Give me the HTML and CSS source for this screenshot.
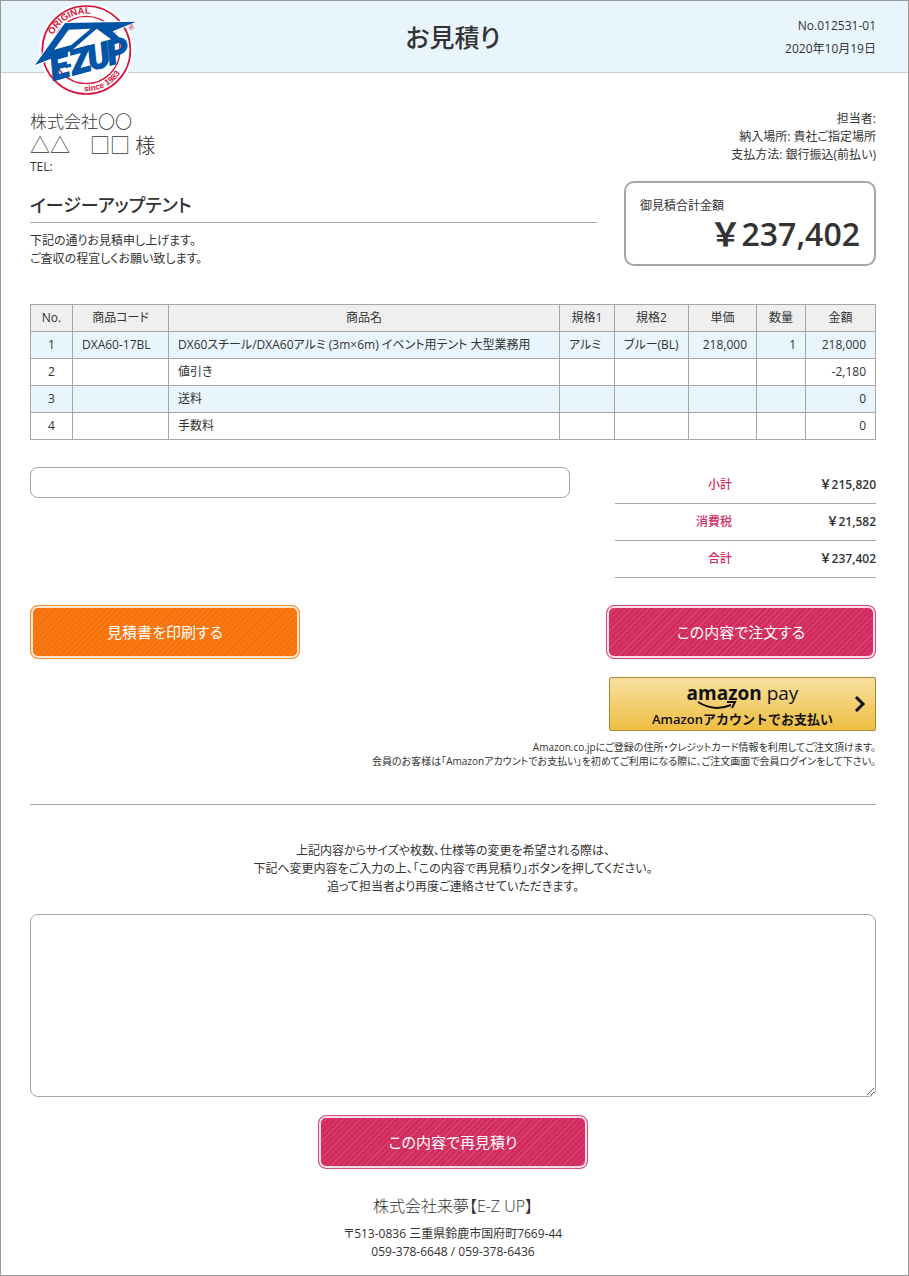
FILE: index.html
```html
<!DOCTYPE html>
<html lang="ja">
<head>
  <meta charset="UTF-8" />
  <meta name="viewport" content="width=device-width, initial-scale=1" />
  <title>お見積り | E-Z UP</title>
  <link rel="stylesheet" href="styles.css">
</head>
<body>
<div class="page">

  <header class="header">
    <svg class="logo" viewBox="0 0 306 288" role="img" aria-label="E-Z UP">
      <defs>
        <path id="arcTop" d="M57 101 A108 108 0 0 1 251 91" />
        <path id="arcBottom" d="M146 267 A124 124 0 0 0 281 144" />
      </defs>
      <circle cx="157" cy="144" r="142" fill="#fff" />
      <circle cx="157" cy="144" r="132" fill="#fff" stroke="#d7123a" stroke-width="5" />
      <circle cx="157" cy="144" r="101" fill="none" stroke="#d7123a" stroke-width="4" />
      <text class="logo-small logo-top"><textPath href="#arcTop" startOffset="2">ORIGINAL</textPath></text>
      <text class="logo-small"><textPath href="#arcBottom" startOffset="4">since 1983</textPath></text>
      <path d="M3 189 L93 63 L306 59 L236 88 L270 120 L246 122 L188 80 L112 146 Z" fill="#0054a6" stroke="#fff" stroke-width="6" paint-order="stroke" />
      <path d="M60 143 L104 83 L170 80 L112 129 Z" fill="#fff" />
      <text class="logo-name" transform="rotate(-15 58 236)"><tspan x="58" y="236">E</tspan><tspan class="logo-dash" x="102" y="220">-</tspan><tspan x="120" y="236">Z</tspan><tspan x="174" y="236">U</tspan><tspan x="234" y="236">P</tspan></text>
      <text class="logo-reg" x="284" y="84">®</text>
    </svg>
    <h1>お見積り</h1>
    <div class="header-info">
      <p>No.012531-01</p>
      <p>2020年10月19日</p>
    </div>
  </header>

  <main class="content">
    <div class="top">
      <div class="customer">
        <p class="company">株式会社〇〇</p>
        <p class="person">△△　□□ 様</p>
        <p class="tel">TEL:</p>
      </div>
      <div class="terms">
        <p>担当者:</p>
        <p>納入場所: 貴社ご指定場所</p>
        <p>支払方法: 銀行振込(前払い)</p>
      </div>
    </div>

    <div class="summary">
      <div class="subject">
        <h2>イージーアップテント</h2>
        <p>下記の通りお見積申し上げます。<br>ご査収の程宜しくお願い致します。</p>
      </div>
      <div class="total-box">
        <p class="total-label">御見積合計金額</p>
        <p class="total-price">￥237,402</p>
      </div>
    </div>

    <table class="items">
      <colgroup>
        <col class="col-no"><col class="col-code"><col><col class="col-spec1"><col class="col-spec2"><col class="col-price"><col class="col-qty"><col class="col-sum">
      </colgroup>
      <thead>
        <tr><th>No.</th><th>商品コード</th><th>商品名</th><th>規格1</th><th>規格2</th><th>単価</th><th>数量</th><th>金額</th></tr>
      </thead>
      <tbody>
        <tr><td class="center">1</td><td>DXA60-17BL</td><td>DX60スチール/DXA60アルミ (3m×6m) イベント用テント 大型業務用</td><td>アルミ</td><td>ブルー(BL)</td><td class="num">218,000</td><td class="num">1</td><td class="num">218,000</td></tr>
        <tr><td class="center">2</td><td></td><td>値引き</td><td></td><td></td><td></td><td></td><td class="num">-2,180</td></tr>
        <tr><td class="center">3</td><td></td><td>送料</td><td></td><td></td><td></td><td></td><td class="num">0</td></tr>
        <tr><td class="center">4</td><td></td><td>手数料</td><td></td><td></td><td></td><td></td><td class="num">0</td></tr>
      </tbody>
    </table>

    <div class="result">
      <input class="memo" type="text" aria-label="備考" readonly>
      <table class="totals">
        <tr><th>小計</th><td>￥215,820</td></tr>
        <tr><th>消費税</th><td>￥21,582</td></tr>
        <tr><th>合計</th><td>￥237,402</td></tr>
      </table>
    </div>

    <div class="actions">
      <button type="button" class="btn btn-orange">見積書を印刷する</button>
      <div class="order">
        <button type="button" class="btn btn-pink">この内容で注文する</button>
        <button type="button" class="amazon">
          <span class="amazon-logo"><b>amazon</b> pay
            <svg class="smile" viewBox="0 0 40 10"><path d="M1 2 Q17 12 34 5" /><path d="M30 2 L38 2 L35 8" /></svg>
          </span>
          <span class="amazon-text">Amazonアカウントでお支払い</span>
          <svg class="arrow" viewBox="0 0 12 16"><path d="M2 1 L9 8 L2 15" /></svg>
        </button>
      </div>
    </div>
    <p class="amazon-note">Amazon.co.jpにご登録の住所・クレジットカード情報を利用してご注文頂けます。<br>会員のお客様は「Amazonアカウントでお支払い」を初めてご利用になる際に、ご注文画面で会員ログインをして下さい。</p>

    <form class="request">
      <label for="request">上記内容からサイズや枚数、仕様等の変更を希望される際は、<br>下記へ変更内容をご入力の上、「この内容で再見積り」ボタンを押してください。<br>追って担当者より再度ご連絡させていただきます。</label>
      <textarea id="request"></textarea>
      <button type="button" class="btn btn-pink">この内容で再見積り</button>
    </form>
  </main>

  <footer class="footer">
    <p class="footer-name">株式会社来夢【E-Z UP】</p>
    <p>〒513-0836 三重県鈴鹿市国府町7669-44<br>059-378-6648 / 059-378-6436</p>
  </footer>

</div>
</body>
</html>
```
FILE: styles.css
```css
:root {
  --line: #a6a6a6;
  --blue: #e9f5fc;
  --pink: #d12b5f;
  --orange: #fa780f;
}

* {
  box-sizing: border-box;
  margin: 0;
  padding: 0;
}

body {
  color: #333;
  background-color: white;
  font-family: "Open Sans", "Noto Sans CJK JP", sans-serif;
  font-size: 12px;
  line-height: 18px;
  font-feature-settings: "palt";
}

button,
input,
textarea {
  font: inherit;
  font-feature-settings: inherit;
}

.page {
  border: 1px solid #999;
}

/* header */
.header {
  position: relative;
  display: grid;
  grid-template-columns: 1fr auto 1fr;
  align-items: center;
  min-height: 72px;
  padding: 0 32px 0 29px;
  background-color: var(--blue);
  border-bottom: 1px solid #ccc;
}

.logo {
  position: absolute;
  left: 33px;
  top: 1px;
  width: 102px;
  height: 96px;
  overflow: visible;
}

.logo-small {
  font-family: "Liberation Sans", sans-serif;
  font-size: 25px;
  font-weight: bold;
  fill: #d7123a;
}

.logo-top {
  font-size: 28px;
}

.logo-name {
  font-family: Roboto, "Liberation Sans", sans-serif;
  font-size: 104px;
  font-weight: 900;
  font-style: italic;
  fill: #0054a6;
  stroke: #0054a6;
  stroke-width: 3px;
}

.logo-dash {
  font-size: 50px;
}

.logo-reg {
  font-family: "Liberation Sans", sans-serif;
  font-size: 22px;
  fill: #d7123a;
}

.header h1 {
  grid-column: 2;
  font-size: 25px;
  font-weight: 500;
  line-height: 36px;
}

.header-info {
  text-align: right;
  line-height: 23px;
}

/* content */
.content {
  padding: 37px 32px 0 29px;
}

.top {
  display: flex;
  justify-content: space-between;
  min-height: 71px;
}

.company,
.person {
  font-size: 17px;
  font-weight: 300;
  line-height: 24px;
}

.person {
  font-size: 20px;
}

.terms {
  text-align: right;
}

.summary {
  display: flex;
  align-items: flex-start;
  gap: 27px;
}

.subject {
  flex: 1;
  padding-top: 8px;
}

.subject h2 {
  margin-bottom: 9px;
  padding-bottom: 1px;
  border-bottom: 1px solid var(--line);
  font-size: 18px;
  font-weight: 500;
  line-height: 32px;
}

.total-box {
  width: 252px;
  height: 85px;
  padding: 14px;
  border: 2px solid var(--line);
  border-radius: 10px;
}

.total-price {
  text-align: right;
  font-size: 32px;
  font-weight: 600;
  line-height: 38px;
  font-feature-settings: normal;
}

/* items */
.items {
  width: 100%;
  margin-top: 36px;
  border-collapse: collapse;
  table-layout: fixed;
}

.items th,
.items td {
  height: 27px;
  padding: 0 9px;
  border: 1px solid var(--line);
  white-space: nowrap;
}

.items th {
  padding: 0;
  background-color: #efefef;
  font-weight: normal;
}

.items tbody tr:nth-child(odd) {
  background-color: var(--blue);
}

.items .center {
  text-align: center;
}

.items .num {
  text-align: right;
}

.col-no { width: 42px; }
.col-code { width: 96px; }
.col-spec1 { width: 55px; }
.col-spec2 { width: 74px; }
.col-price { width: 68px; }
.col-qty { width: 49px; }
.col-sum { width: 70px; }

.result {
  display: flex;
  align-items: flex-start;
  gap: 45px;
  margin-top: 27px;
}

.memo {
  flex: 1;
  height: 31px;
  padding: 0 10px;
  border: 1px solid var(--line);
  border-radius: 8px;
}

.totals {
  width: 261px;
  border-collapse: separate;
  border-spacing: 0;
}

.totals th,
.totals td {
  height: 37px;
  border-bottom: 1px solid var(--line);
  text-align: right;
  font-weight: 600;
  font-feature-settings: normal;
}

.totals th {
  width: 117px;
  color: var(--pink);
  font-weight: 500;
}

/* buttons */
.btn {
  width: 270px;
  height: 54px;
  border: 1px solid;
  border-radius: 8px;
  color: white;
  font-size: 15px;
  cursor: pointer;
}

.btn-orange {
  border-color: #f58a35;
  background: repeating-linear-gradient(135deg, var(--orange) 0 3px, #e96f12 3px 4px);
  box-shadow: inset 0 0 0 2px #ffe7d2;
}

.btn-pink {
  border-color: #d84a78;
  background: repeating-linear-gradient(135deg, var(--pink) 0 3px, #d8446f 3px 4px);
  box-shadow: inset 0 0 0 2px #fbe0e9;
}

.actions {
  display: flex;
  justify-content: space-between;
  align-items: flex-start;
  margin-top: 27px;
}

.order {
  display: flex;
  flex-direction: column;
  align-items: flex-end;
  gap: 18px;
}

.amazon {
  position: relative;
  display: flex;
  flex-direction: column;
  align-items: center;
  width: 267px;
  height: 54px;
  padding-top: 3px;
  border: 1px solid #a88734;
  border-radius: 2px;
  background: linear-gradient(#f8e0a0, #efbe42);
  color: #111;
  cursor: pointer;
}

.amazon-logo {
  position: relative;
  font-size: 19px;
  line-height: 24px;
}

.smile {
  position: absolute;
  left: 10px;
  bottom: -5px;
  width: 40px;
  height: 10px;
}

.smile path,
.arrow path {
  fill: none;
  stroke: #111;
  stroke-width: 2;
}

.amazon-text {
  font-size: 13px;
  font-weight: 600;
  line-height: 28px;
  font-feature-settings: normal;
}

.arrow {
  position: absolute;
  right: 9px;
  top: 18px;
  width: 12px;
  height: 16px;
}

.arrow path {
  stroke-width: 3;
}

.amazon-note {
  margin-top: 9px;
  padding-bottom: 36px;
  border-bottom: 1px solid var(--line);
  text-align: right;
  font-size: 10px;
  line-height: 14px;
}

/* request form */
.request {
  display: flex;
  flex-direction: column;
  align-items: center;
  gap: 18px;
  padding-top: 37px;
}

.request label {
  text-align: center;
}

.request textarea {
  width: 100%;
  height: 183px;
  padding: 10px;
  border: 1px solid var(--line);
  border-radius: 8px;
}

.footer {
  padding: 25px 32px 14px 29px;
  text-align: center;
}

.footer-name {
  margin-bottom: 7px;
  font-size: 16px;
  font-weight: 300;
  line-height: 24px;
}
```
